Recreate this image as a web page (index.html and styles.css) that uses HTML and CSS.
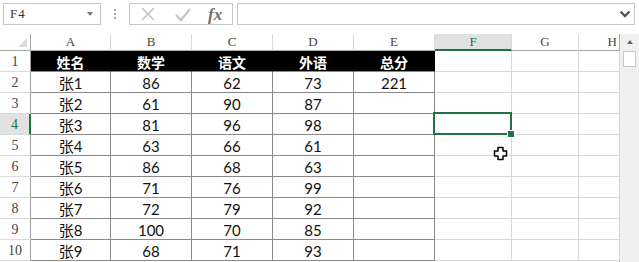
FILE: index.html
```html
<!DOCTYPE html>
<html>
<head>
<meta charset="utf-8">
<link rel="stylesheet" href="styles.css">
</head>
<body>
<div class="toolbar">
  <div class="namebox"><span class="nbtext">F4</span><span class="nbarrow"></span></div>
  <div class="dots"><i></i><i></i><i></i></div>
  <div class="iconbox">
    <svg class="ic" width="18" height="18" viewBox="0 0 18 18"><path d="M3 3 L15 15 M15 3 L3 15" stroke="#c4c4c4" stroke-width="1.6" fill="none"/></svg>
    <svg class="ic" width="18" height="18" viewBox="0 0 18 18"><path d="M2 10 L7 15 L16 4" stroke="#c4c4c4" stroke-width="2.2" fill="none"/></svg>
    <span class="fx">fx</span>
  </div>
  <div class="formula"><svg class="chev" width="12" height="8" viewBox="0 0 12 8"><path d="M1.5 1.5 L6 6 L10.5 1.5" stroke="#555" stroke-width="2.4" fill="none"/></svg></div>
</div>
<div class="sheet">
  <div class="grid">
    <div class="corner"><span class="tri"></span></div>
    <div class="ch">A</div><div class="ch">B</div><div class="ch">C</div><div class="ch">D</div><div class="ch">E</div><div class="ch sel">F</div><div class="ch">G</div><div class="ch hcol">H</div>

    <div class="rh">1</div>
    <div class="c th">姓名</div><div class="c th">数学</div><div class="c th">语文</div><div class="c th">外语</div><div class="c th">总分</div><div class="c"></div><div class="c"></div><div class="c"></div>

    <div class="rh">2</div>
    <div class="c t">张1</div><div class="c t">86</div><div class="c t">62</div><div class="c t">73</div><div class="c t">221</div><div class="c"></div><div class="c"></div><div class="c"></div>

    <div class="rh">3</div>
    <div class="c t">张2</div><div class="c t">61</div><div class="c t">90</div><div class="c t">87</div><div class="c t"></div><div class="c"></div><div class="c"></div><div class="c"></div>

    <div class="rh sel">4</div>
    <div class="c t">张3</div><div class="c t">81</div><div class="c t">96</div><div class="c t">98</div><div class="c t"></div><div class="c active"></div><div class="c"></div><div class="c"></div>

    <div class="rh">5</div>
    <div class="c t">张4</div><div class="c t">63</div><div class="c t">66</div><div class="c t">61</div><div class="c t"></div><div class="c"></div><div class="c"></div><div class="c"></div>

    <div class="rh">6</div>
    <div class="c t">张5</div><div class="c t">86</div><div class="c t">68</div><div class="c t">63</div><div class="c t"></div><div class="c"></div><div class="c"></div><div class="c"></div>

    <div class="rh">7</div>
    <div class="c t">张6</div><div class="c t">71</div><div class="c t">76</div><div class="c t">99</div><div class="c t"></div><div class="c"></div><div class="c"></div><div class="c"></div>

    <div class="rh">8</div>
    <div class="c t">张7</div><div class="c t">72</div><div class="c t">79</div><div class="c t">92</div><div class="c t"></div><div class="c"></div><div class="c"></div><div class="c"></div>

    <div class="rh">9</div>
    <div class="c t">张8</div><div class="c t">100</div><div class="c t">70</div><div class="c t">85</div><div class="c t"></div><div class="c"></div><div class="c"></div><div class="c"></div>

    <div class="rh">10</div>
    <div class="c t">张9</div><div class="c t">68</div><div class="c t">71</div><div class="c t">93</div><div class="c t"></div><div class="c"></div><div class="c"></div><div class="c"></div>

    <svg class="cursor" width="15" height="15" viewBox="0 0 15 15"><path d="M5 1.5 H10 V5 H13.5 V10 H10 V13.5 H5 V10 H1.5 V5 H5 Z" fill="#fff" stroke="#000" stroke-width="1.5" stroke-linejoin="round"/></svg>
  </div>
  <div class="vscroll">
    <div class="upbtn"><span class="uptri"></span></div>
    <div class="thumb"></div>
  </div>
</div>
</body>
</html>
```
FILE: styles.css
```css
* { box-sizing: border-box; }
html, body { margin: 0; padding: 0; background: #fff; }
body { width: 639px; height: 262px; overflow: hidden; font-family: Lato, "Noto Sans CJK SC", sans-serif; }

.toolbar {
  display: flex;
  align-items: center;
  padding: 3px 4px 0 3px;
  height: 25px;
}
.namebox {
  width: 98px;
  height: 22px;
  border: 1px solid #c6c6c6;
  display: flex;
  align-items: center;
  justify-content: space-between;
  padding: 0 7px 0 6px;
}
.nbtext { font-family: "Liberation Serif", serif; font-size: 13px; color: #333; letter-spacing: 1px; }
.nbarrow {
  width: 0; height: 0;
  border-left: 3px solid transparent;
  border-right: 3px solid transparent;
  border-top: 4px solid #777;
}
.dots {
  width: 28px;
  display: flex;
  flex-direction: column;
  align-items: center;
  gap: 2px;
}
.dots i { display: block; width: 2px; height: 2px; background: #aaa; }
.iconbox {
  width: 104px;
  height: 22px;
  border: 1px solid #c6c6c6;
  display: flex;
  align-items: center;
  padding-left: 9px;
  gap: 17px;
}
.fx { font-family: "Liberation Serif", serif; font-style: italic; font-weight: bold; font-size: 17px; color: #707070; margin-left: -1px; line-height: 1; }
.formula {
  flex: 1;
  margin-left: 4px;
  height: 22px;
  border: 1px solid #c6c6c6;
  display: flex;
  align-items: center;
  justify-content: flex-end;
  padding-right: 3px;
}

.sheet {
  display: flex;
  margin-top: 9px;
}
.grid {
  position: relative;
  width: 620px;
  display: grid;
  grid-template-columns: 31px 80px 81px 81px 81px 81px 77px 67px 41px;
  grid-template-rows: 17px repeat(10, 21px);
  border-right: 1px solid #ababab;
}
.corner {
  border-right: 1px solid #ababab;
  border-bottom: 1px solid #ababab;
  position: relative;
}
.tri {
  position: absolute;
  right: 3px; bottom: 3px;
  width: 0; height: 0;
  border-left: 9px solid transparent;
  border-bottom: 9px solid #dcdcdc;
}
.ch {
  font-family: "Liberation Serif", serif;
  font-size: 13px;
  color: #444;
  text-align: center;
  line-height: 16px;
  border-right: 1px solid #dadada;
  border-bottom: 1px solid #ababab;
}
.ch.sel {
  background: #e1e1e1;
  color: #217346;
  border-bottom: 2px solid #217346;
}
.ch.hcol { text-align: right; padding-right: 3px; border-right: none; }
.rh {
  font-family: "Liberation Serif", serif;
  font-size: 14px;
  color: #444;
  text-align: center;
  line-height: 22px;
  border-right: 1px solid #9e9e9e;
  border-bottom: 1px solid #dadada;
}
.rh.sel {
  background: #e1e1e1;
  color: #217346;
  border-right: 2px solid #217346;
}
.c {
  border-right: 1px solid #d8d8d8;
  border-bottom: 1px solid #d8d8d8;
  font-size: 15px;
  color: #111;
  text-align: center;
  line-height: 21px;
  padding-top: 1px;
}
.t {
  border-right-color: #8a8a8a;
  border-bottom-color: #8a8a8a;
}
.th {
  background: #000;
  color: #fff;
  font-weight: bold;
  font-size: 14px;
  border-right-color: #000;
  border-bottom-color: #8a8a8a;
}
.active { position: relative; }
.active::before {
  content: "";
  position: absolute;
  left: -2px; top: -2px; right: -1px; bottom: -1px;
  border: 2px solid #217346;
}
.active::after {
  content: "";
  position: absolute;
  right: -4px; bottom: -4px;
  width: 6px; height: 6px;
  background: #217346;
  border: 1px solid #fff;
}
.cursor {
  position: absolute;
  left: 493px;
  top: 112px;
}

.vscroll {
  width: 19px;
  height: 230px;
  background: #f0f0f0;
  display: flex;
  flex-direction: column;
  align-items: center;
  padding-top: 1px;
}
.upbtn {
  width: 16px;
  height: 14px;
  display: flex;
  align-items: center;
  justify-content: center;
}
.uptri {
  width: 0; height: 0;
  border-left: 3px solid transparent;
  border-right: 3px solid transparent;
  border-bottom: 4px solid #666;
}
.thumb {
  margin-top: 2px;
  width: 13px;
  height: 16px;
  background: #fff;
  border: 1px solid #c8c8c8;
}
```
